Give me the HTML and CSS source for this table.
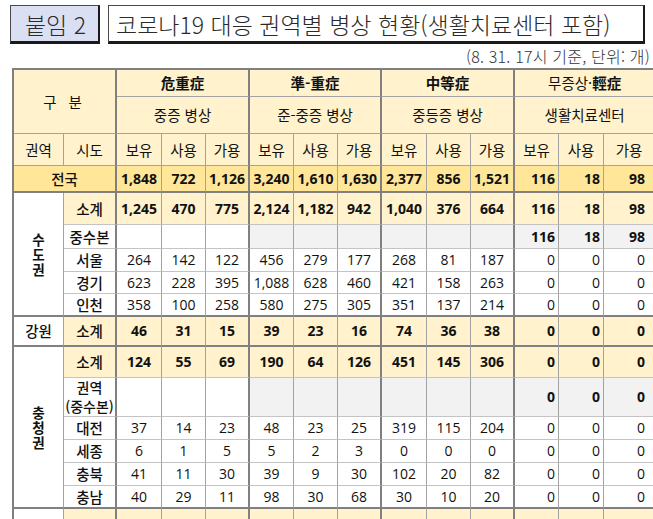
FILE: index.html
```html
<!DOCTYPE html>
<html lang="ko">
<head>
<meta charset="utf-8">
<title>코로나19 대응 권역별 병상 현황</title>
<link rel="stylesheet" href="styles.css">
</head>
<body>
<div class="top">
  <div class="tag">붙임 2</div>
  <div class="title">코로나19 대응 권역별 병상 현황(생활치료센터 포함)</div>
</div>
<div class="sub">(8. 31. 17시 기준, 단위: 개)</div>
<table class="beds">
  <colgroup>
    <col class="c-reg"><col class="c-sido">
    <col class="c45"><col class="c44"><col class="c44">
    <col class="c44"><col class="c44"><col class="c44">
    <col class="c45"><col class="c44"><col class="c44">
    <col class="c44"><col class="c45"><col class="c-last">
  </colgroup>
  <tr class="h27 hd">
    <td colspan="2" rowspan="2" class="gr gubun">구 분</td>
    <td colspan="3" class="gr b">危重症</td>
    <td colspan="3" class="gr b">準-重症</td>
    <td colspan="3" class="gr b">中等症</td>
    <td colspan="3" class="gr">무증상·<b>輕症</b></td>
  </tr>
  <tr class="h37 hd">
    <td colspan="3" class="gr">중증 병상</td>
    <td colspan="3" class="gr">준-중증 병상</td>
    <td colspan="3" class="gr">중등증 병상</td>
    <td colspan="3" class="gr">생활치료센터</td>
  </tr>
  <tr class="h32 hd">
    <td>권역</td><td class="gr">시도</td>
    <td>보유</td><td>사용</td><td class="gr">가용</td>
    <td>보유</td><td>사용</td><td class="gr">가용</td>
    <td>보유</td><td>사용</td><td class="gr">가용</td>
    <td>보유</td><td>사용</td><td class="gr">가용</td>
  </tr>
  <tr class="h27 total tb">
    <td colspan="2" class="gr lbl">전국</td>
    <td class="num">1,848</td><td class="num">722</td><td class="num gr">1,126</td>
    <td class="num">3,240</td><td class="num">1,610</td><td class="num gr">1,630</td>
    <td class="num">2,377</td><td class="num">856</td><td class="num gr">1,521</td>
    <td class="num r">116</td><td class="num r">18</td><td class="num r gr rl">98</td>
  </tr>
  <tr class="h32 subtotal">
    <td rowspan="5" class="region tbc">수<br>도<br>권</td>
    <td class="gr lbl">소계</td>
    <td class="num">1,245</td><td class="num">470</td><td class="num gr">775</td>
    <td class="num">2,124</td><td class="num">1,182</td><td class="num gr">942</td>
    <td class="num">1,040</td><td class="num">376</td><td class="num gr">664</td>
    <td class="num r">116</td><td class="num r">18</td><td class="num r gr rl">98</td>
  </tr>
  <tr class="h24 hq">
    <td class="gr lbl">중수본</td>
    <td></td><td></td><td class="gr"></td>
    <td class="gy"></td><td class="gy"></td><td class="gy gr"></td>
    <td class="gy"></td><td class="gy"></td><td class="gy gr"></td>
    <td class="gy num r">116</td><td class="gy num r">18</td><td class="gy num r gr rl">98</td>
  </tr>
  <tr class="h23 row">
    <td class="gr lbl">서울</td>
    <td>264</td><td>142</td><td class="gr">122</td>
    <td>456</td><td>279</td><td class="gr">177</td>
    <td>268</td><td>81</td><td class="gr">187</td>
    <td class="r">0</td><td class="r">0</td><td class="r gr rl">0</td>
  </tr>
  <tr class="h22 row">
    <td class="gr lbl">경기</td>
    <td>623</td><td>228</td><td class="gr">395</td>
    <td>1,088</td><td>628</td><td class="gr">460</td>
    <td>421</td><td>158</td><td class="gr">263</td>
    <td class="r">0</td><td class="r">0</td><td class="r gr rl">0</td>
  </tr>
  <tr class="h23 row tb">
    <td class="gr lbl">인천</td>
    <td>358</td><td>100</td><td class="gr">258</td>
    <td>580</td><td>275</td><td class="gr">305</td>
    <td>351</td><td>137</td><td class="gr">214</td>
    <td class="r">0</td><td class="r">0</td><td class="r gr rl">0</td>
  </tr>
  <tr class="h30 subtotal tb">
    <td class="region-h lbl">강원</td>
    <td class="gr lbl">소계</td>
    <td class="num">46</td><td class="num">31</td><td class="num gr">15</td>
    <td class="num">39</td><td class="num">23</td><td class="num gr">16</td>
    <td class="num">74</td><td class="num">36</td><td class="num gr">38</td>
    <td class="num r">0</td><td class="num r">0</td><td class="num r gr rl">0</td>
  </tr>
  <tr class="h31 subtotal">
    <td rowspan="6" class="region tbc">충<br>청<br>권</td>
    <td class="gr lbl">소계</td>
    <td class="num">124</td><td class="num">55</td><td class="num gr">69</td>
    <td class="num">190</td><td class="num">64</td><td class="num gr">126</td>
    <td class="num">451</td><td class="num">145</td><td class="num gr">306</td>
    <td class="num r">0</td><td class="num r">0</td><td class="num r gr rl">0</td>
  </tr>
  <tr class="h39 hq">
    <td class="gr lbl two">권역<br>(중수본)</td>
    <td></td><td></td><td class="gr"></td>
    <td class="gy"></td><td class="gy"></td><td class="gy gr"></td>
    <td class="gy"></td><td class="gy"></td><td class="gy gr"></td>
    <td class="gy num r">0</td><td class="gy num r">0</td><td class="gy num r gr rl">0</td>
  </tr>
  <tr class="h23 row">
    <td class="gr lbl">대전</td>
    <td>37</td><td>14</td><td class="gr">23</td>
    <td>48</td><td>23</td><td class="gr">25</td>
    <td>319</td><td>115</td><td class="gr">204</td>
    <td class="r">0</td><td class="r">0</td><td class="r gr rl">0</td>
  </tr>
  <tr class="h23 row">
    <td class="gr lbl">세종</td>
    <td>6</td><td>1</td><td class="gr">5</td>
    <td>5</td><td>2</td><td class="gr">3</td>
    <td>0</td><td>0</td><td class="gr">0</td>
    <td class="r">0</td><td class="r">0</td><td class="r gr rl">0</td>
  </tr>
  <tr class="h23 row">
    <td class="gr lbl">충북</td>
    <td>41</td><td>11</td><td class="gr">30</td>
    <td>39</td><td>9</td><td class="gr">30</td>
    <td>102</td><td>20</td><td class="gr">82</td>
    <td class="r">0</td><td class="r">0</td><td class="r gr rl">0</td>
  </tr>
  <tr class="h23 row tb">
    <td class="gr lbl">충남</td>
    <td>40</td><td>29</td><td class="gr">11</td>
    <td>98</td><td>30</td><td class="gr">68</td>
    <td>30</td><td>10</td><td class="gr">20</td>
    <td class="r">0</td><td class="r">0</td><td class="r gr rl">0</td>
  </tr>
  <tr class="h36 subtotal">
    <td class="region"></td>
    <td class="gr lbl">소계</td>
    <td class="num"></td><td class="num"></td><td class="num gr"></td>
    <td class="num"></td><td class="num"></td><td class="num gr"></td>
    <td class="num"></td><td class="num"></td><td class="num gr"></td>
    <td class="num r"></td><td class="num r"></td><td class="num r gr rl"></td>
  </tr>
</table>
</body>
</html>
```
FILE: styles.css
```css
html, body {
  margin: 0;
  padding: 0;
  overflow: hidden;
  background: #ffffff;
}
body {
  width: 653px;
  height: 519px;
  font-family: "Noto Sans CJK KR", sans-serif;
  color: #111;
}
.top {
  display: flex;
  gap: 8px;
  padding: 5px 0 0 10px;
}
.tag, .title {
  box-sizing: border-box;
  height: 39px;
  border: 1px solid #4a4a4a;
  border-right: 2px solid #1a1a1a;
  border-bottom: 3px solid #1a1a1a;
  display: flex;
  align-items: center;
  font-size: 23px;
  font-weight: 300;
  color: #2a2a2a;
  letter-spacing: 0;
}
.tag {
  width: 90px;
  background: #dadff4;
  justify-content: center;
  padding-left: 2px;
}
.title {
  width: 537px;
  background: #ffffff;
  padding-left: 7px;
}
.sub {
  margin-top: 2px;
  height: 20px;
  line-height: 20px;
  text-align: right;
  padding-right: 3px;
  font-size: 16px;
  font-weight: 300;
  color: #333;
  letter-spacing: 0.2px;
}
.beds {
  margin: 2px 0 0 12px;
  border-collapse: separate;
  border-spacing: 0;
  table-layout: fixed;
  width: 644px;
  border-top: 2px solid #808080;
  border-left: 2px solid #808080;
  font-family: "Open Sans", "Noto Sans CJK KR", sans-serif;
  font-size: 14px;
  line-height: 16px;
  color: #111;
}
.c-reg { width: 50px; }
.c-sido { width: 53px; }
.c45 { width: 45px; }
.c44 { width: 44px; }
.c-last { width: 52px; }
.beds td {
  padding: 0;
  text-align: center;
  vertical-align: middle;
  white-space: nowrap;
  border-right: 1px solid #a3a3a3;
  border-bottom: 1px solid #c4c4c4;
  background: #ffffff;
}
.beds td.gr { border-right: 2px solid #808080; }
.beds tr.tb td, .beds td.tbc { border-bottom: 2px solid #808080; }
.beds tr.hd td {
  background: #fff2cc;
  border-bottom-color: #a3a3a3;
  font-family: "Noto Sans CJK KR", sans-serif;
  font-size: 14.5px;
}
.beds .b, .beds b { font-weight: 700; }
.gubun { letter-spacing: 4px; }
.h22 { height: 22px; }
.h23 { height: 23px; }
.h24 { height: 24px; }
.h27 { height: 27px; }
.h30 { height: 30px; }
.h31 { height: 31px; }
.h32 { height: 32px; }
.h36 { height: 36px; }
.h37 { height: 37px; }
.h39 { height: 39px; }
.beds tr.total td { background: #ffe699; }
.beds tr.subtotal td { background: #fff2cc; }
.beds tr.subtotal td.region,
.beds tr.subtotal td.region-h { background: #ffffff; }
.beds td.lbl {
  font-family: "Noto Sans CJK KR", sans-serif;
  font-size: 14.5px;
  font-weight: 500;
}
.beds td.region {
  font-family: "Noto Sans CJK KR", sans-serif;
  font-size: 13.5px;
  font-weight: 700;
  line-height: 15px;
  background: #ffffff;
}
.beds td.two { font-size: 14px; line-height: 19px; }
.beds td.num { font-weight: 700; }
.beds td.r { text-align: right; padding-right: 3px; }
.beds td.rl { border-right: none; padding-right: 11px; }
.beds td.gy { background: #f2f2f2; }
```
